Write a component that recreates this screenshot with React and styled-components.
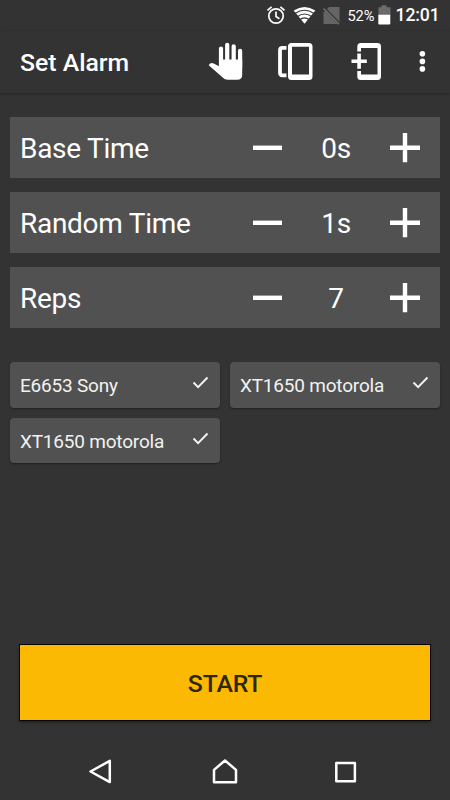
import styled, { createGlobalStyle } from 'styled-components';

const GlobalStyle = createGlobalStyle`
    * {
        box-sizing: border-box;
    }
    body {
        margin: 0;
        background-color: #333333;
        color: #ffffff;
        font-family: Roboto, sans-serif;
    }
    button {
        padding: 0;
        border: none;
        background: none;
        color: inherit;
        font-family: inherit;
    }
    svg {
        display: block;
        flex-shrink: 0;
    }
`

const Screen = styled.div`
    display: flex;
    flex-direction: column;
    width: 450px;
    height: 800px;
    overflow: hidden;
    background-color: #333333;
`

const StatusBar = styled.header`
    display: flex;
    align-items: center;
    height: 31px;
    padding-left: 266px;
`

const BatteryLevel = styled.span`
    width: 32px;
    padding-left: 1.5px;
    font-size: 14.6px;
    letter-spacing: -0.1px;
    line-height: 32px;
`

const Clock = styled.span`
    padding-left: 4.5px;
    font-size: 17.6px;
    font-weight: 500;
    letter-spacing: -0.1px;
    line-height: 31px;
`

const Toolbar = styled.div`
    display: flex;
    align-items: center;
    height: 62px;
    padding-left: 20px;
    box-shadow: 0 1px 3px rgba(0, 0, 0, 0.3);
`

const Title = styled.h1`
    flex: 1;
    margin: 0;
    font-size: 24.8px;
    font-weight: 500;
    line-height: 63px;
`

const Actions = styled.div`
    display: flex;
    width: 243px;
`

const Content = styled.main`
    display: flex;
    flex: 1;
    flex-direction: column;
    padding: 24.2px 10px 0;
`

const Settings = styled.div`
    display: flex;
    flex-direction: column;
    gap: 14.4px;
`

const Setting = styled.div`
    display: flex;
    align-items: center;
    height: 60.6px;
    padding: 0 20px 0 10px;
    background-color: #515151;
`

const Label = styled.span`
    flex: 1;
    padding-top: 3px;
    font-size: 28px;
    letter-spacing: -0.28px;
    line-height: 56px;
`

const Value = styled.span`
    width: 108px;
    padding-top: 3px;
    font-size: 28px;
    letter-spacing: -0.4px;
    line-height: 56px;
    text-align: center;
`

const StepButton = styled.button`
    padding-top: 2px;
`

const Devices = styled.div`
    display: grid;
    grid-template-columns: 1fr 1fr;
    gap: 10px;
    margin-top: 34.6px;
`

const Device = styled.div`
    display: flex;
    justify-content: space-between;
    height: 45.4px;
    padding: 0 11px 0 10px;
    border-radius: 4px;
    background-color: #515151;
    box-shadow: 0 1px 2px rgba(0, 0, 0, 0.4);
    color: #f1f1f1;
    font-size: 19px;
    letter-spacing: -0.2px;
    line-height: 47px;
`

const Start = styled.button`
    height: 75px;
    margin: auto 10px 24px;
    background-color: #fbb904;
    box-shadow: 0 0 0 1px #080500, 0 2px 3px rgba(0, 0, 0, 0.5);
    color: #2d2702;
    font-size: 24.8px;
    font-weight: 500;
    letter-spacing: -0.2px;
    line-height: 77px;
`

const NavBar = styled.nav`
    display: flex;
    align-items: center;
    justify-content: space-between;
    height: 56px;
    padding: 0 88px;
`

const StatusIcons = () => (
    <svg width="80" height="31" viewBox="266 0 80 31">
        <g fill="none" stroke="#ffffff" strokeWidth="1.7">
            <circle cx="276" cy="16" r="7.2" />
            <path d="M276 11.5v5l3.4 2.2M267.5 10.4l4.1-3.6M284.5 10.4l-4.1-3.6" />
        </g>
        <path d="M293.7 10.6Q304.5 3.6 315.3 10.6L304.5 23.8Z" fill="#ffffff" />
        <g fill="none" stroke="#333333" strokeWidth="1.1">
            <path d="M295 13.5q9.5-6.5 19 0M297.5 16.5q7-5 14 0M300 19.5q4.5-3.3 9 0" />
        </g>
        <path d="M329 7h10.5v17h-16V12.5z" fill="#656565" />
        <path d="M323 7.3l17 17.2" stroke="#333333" strokeWidth="3" />
        <path d="M323.5 8.6l15.5 15.7" stroke="#777777" strokeWidth="1.4" />
    </svg>
)

const BatteryIcon = () => (
    <svg width="13" height="31" viewBox="378 0 13 31">
        <path d="M381.5 5.3h5v2h4V15h-12V7.3h3z" fill="#6c6c6c" />
        <path d="M378.3 14.7h12v8.8q0 1-1 1h-10q-1 0-1-1z" fill="#ffffff" />
    </svg>
)

const HandIcon = () => (
    <svg width="71" height="62" viewBox="207 31 71 62">
        <g fill="none" stroke="#ffffff" strokeWidth="4.2" strokeLinecap="round">
            <path d="M221 48.5V66M227.2 44.8V66M233.7 46.3V66M240.1 50.8V68" />
        </g>
        <path d="M219 59.5h23.2v15.2q0 5-5 5h-9.5q-3 0-5-2.2L208.7 65.3q1.6-3.3 5-1.9l5.3 2.9z" fill="#ffffff" />
    </svg>
)

const ScreensIcon = () => (
    <svg width="73" height="62" viewBox="278 31 73 62">
        <path d="M286.5 47.8h-4q-2.5 0-2.5 2.5v22.5q0 2.5 2.5 2.5h4" fill="none" stroke="#ffffff" strokeWidth="3.8" />
        <path
            d="M291.5 43h17.5q3.5 0 3.5 3.5v30q0 3.5-3.5 3.5h-17.5q-3.5 0-3.5-3.5v-30q0-3.5 3.5-3.5zM292 46.8v27.7h17V46.8z"
            fill="#ffffff"
            fillRule="evenodd"
        />
    </svg>
)

const AddDeviceIcon = () => (
    <svg width="67" height="62" viewBox="351 31 67 62">
        <path
            d="M357.3 51.5v-5q0-3.5 3.5-3.5h16.7q3.5 0 3.5 3.5v30q0 3.5-3.5 3.5h-16.7q-3.5 0-3.5-3.5V71h3.7v3.5h16.5V48H361v3.5z"
            fill="#ffffff"
        />
        <path d="M359.1 53.5v15.2M351.5 61.3h15.3" stroke="#ffffff" strokeWidth="3.6" />
    </svg>
)

const MoreIcon = () => (
    <svg width="10" height="62" viewBox="418 31 10 62">
        <g fill="#ffffff">
            <circle cx="422.4" cy="53.8" r="2.8" />
            <circle cx="422.4" cy="61.4" r="2.8" />
            <circle cx="422.4" cy="68.9" r="2.8" />
        </g>
    </svg>
)

const MinusIcon = () => (
    <svg width="29" height="30" viewBox="0 0 29 30">
        <path d="M0 14.8h29" stroke="#ffffff" strokeWidth="4.4" />
    </svg>
)

const PlusIcon = () => (
    <svg width="30" height="30" viewBox="0 0 30 30">
        <path d="M0 14.8h30M15 0v29.3" stroke="#ffffff" strokeWidth="4.4" />
    </svg>
)

const CheckIcon = () => (
    <svg width="17" height="41" viewBox="0 0 17 41">
        <path d="M1.5 20.5l4.6 4.6L15.5 15.5" fill="none" stroke="#f4f4f4" strokeWidth="1.9" />
    </svg>
)

const BackIcon = () => (
    <svg width="28" height="28" viewBox="-1 0 28 28">
        <path d="M20.8 2.9v21.2L1.5 13.5z" fill="none" stroke="#ffffff" strokeWidth="2.5" strokeLinejoin="round" />
    </svg>
)

const HomeIcon = () => (
    <svg width="26" height="28" viewBox="0 0 26 28">
        <path d="M2 24.2V11.9L13 2.5l11 9.4v12.3z" fill="none" stroke="#ffffff" strokeWidth="2.5" strokeLinejoin="round" />
    </svg>
)

const RecentIcon = () => (
    <svg width="28" height="28" viewBox="0 0 28 28">
        <path d="M2.3 5h18.6v18.3H2.3z" fill="none" stroke="#ffffff" strokeWidth="2.5" strokeLinejoin="round" />
    </svg>
)

const settings = [
    { label: 'Base Time', value: '0s' },
    { label: 'Random Time', value: '1s' },
    { label: 'Reps', value: '7' },
]

const devices = ['E6653 Sony', 'XT1650 motorola', 'XT1650 motorola']

const App = () => {
    return (
        <Screen>
            <GlobalStyle />
            <StatusBar>
                <StatusIcons />
                <BatteryLevel>52%</BatteryLevel>
                <BatteryIcon />
                <Clock>12:01</Clock>
            </StatusBar>
            <Toolbar>
                <Title>Set Alarm</Title>
                <Actions>
                    <HandIcon />
                    <ScreensIcon />
                    <AddDeviceIcon />
                    <MoreIcon />
                </Actions>
            </Toolbar>
            <Content>
                <Settings>
                    {settings.map(({ label, value }) => (
                        <Setting key={label}>
                            <Label>{label}</Label>
                            <StepButton aria-label="Decrease"><MinusIcon /></StepButton>
                            <Value>{value}</Value>
                            <StepButton aria-label="Increase"><PlusIcon /></StepButton>
                        </Setting>
                    ))}
                </Settings>
                <Devices>
                    {devices.map((device, index) => (
                        <Device key={index}>
                            {device}
                            <CheckIcon />
                        </Device>
                    ))}
                </Devices>
                <Start>START</Start>
            </Content>
            <NavBar>
                <BackIcon />
                <HomeIcon />
                <RecentIcon />
            </NavBar>
        </Screen>
    );
}

export default App;
